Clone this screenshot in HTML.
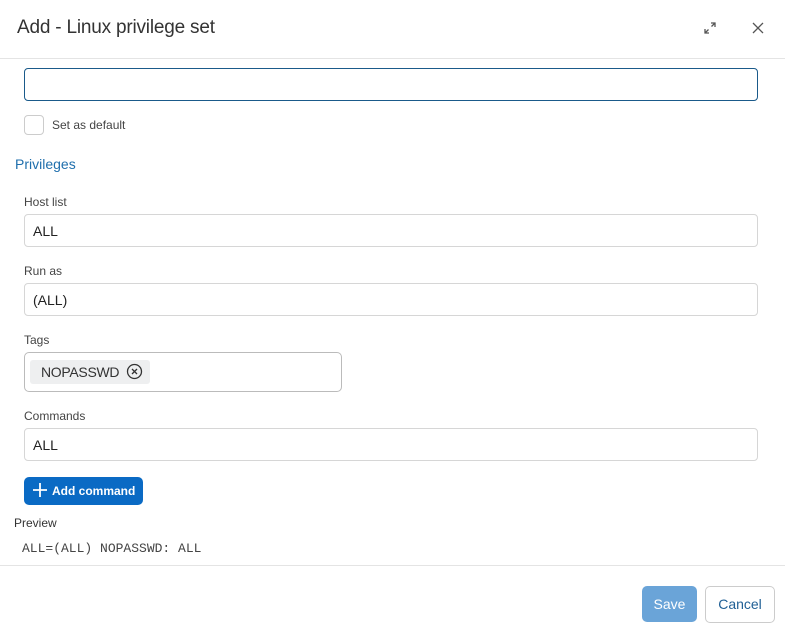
<!DOCTYPE html>
<html><head><style>
*{box-sizing:border-box;margin:0;padding:0}
body{width:785px;height:635px;background:#fff;font-family:"Liberation Sans",sans-serif;color:#333;position:relative;overflow:hidden}
.a{position:absolute}
.inp{position:absolute;left:24px;width:734px;height:33px;border:1px solid #d6d6d6;border-radius:4px;font-size:14px;padding:8px 8px;color:#222}
.lbl{position:absolute;left:24px;font-size:12px;color:#444}
</style></head><body>
<div class="a" style="left:17px;top:17px;font-size:19px;color:#333;letter-spacing:-0.2px">Add - Linux privilege set</div>
<svg class="a" style="left:703px;top:21px" width="14" height="14" viewBox="0 0 14 14" fill="none" stroke="#555" stroke-width="1.3"><path d="M8 2h4v4M12 2L8.5 5.5M6 12H2V8M2 12l3.5-3.5"/></svg>
<svg class="a" style="left:752px;top:22px" width="12" height="12" viewBox="0 0 12 12" stroke="#555" stroke-width="1.3"><path d="M1 1l10 10M11 1L1 11"/></svg>
<div class="a" style="left:0;top:58px;width:785px;height:1px;background:#e4e4e4"></div>
<div class="a" style="left:24px;top:68px;width:734px;height:33px;border:1px solid #1a5a8a;border-radius:4px"></div>
<div class="a" style="left:24px;top:115px;width:20px;height:20px;border:1px solid #ccc;border-radius:4px"></div>
<div class="a" style="left:52px;top:118px;font-size:12px;color:#444">Set as default</div>
<div class="a" style="left:15px;top:156px;font-size:14px;color:#1f6fad">Privileges</div>
<div class="lbl" style="top:195px">Host list</div>
<div class="inp" style="top:214px">ALL</div>
<div class="lbl" style="top:264px">Run as</div>
<div class="inp" style="top:283px">(ALL)</div>
<div class="lbl" style="top:333px">Tags</div>
<div class="a" style="left:24px;top:352px;width:318px;height:40px;border:1px solid #bbb;border-radius:5px"></div>
<div class="a" style="left:30px;top:360px;width:120px;height:24px;background:#eeeff0;border-radius:3px;font-size:14px;padding:4px 11px;color:#333;letter-spacing:-0.3px">NOPASSWD</div>
<svg class="a" style="left:126px;top:363px" width="17" height="17" viewBox="0 0 17 17" fill="none" stroke="#333" stroke-width="1.3"><circle cx="8.5" cy="8.5" r="7"/><path d="M6 6l5 5M11 6l-5 5"/></svg>
<div class="lbl" style="top:409px">Commands</div>
<div class="inp" style="top:428px">ALL</div>
<div class="a" style="left:24px;top:477px;width:119px;height:28px;background:#0a6ac4;border-radius:5px;color:#fff;font-size:12px;font-weight:bold;padding:7px 0 0 28px">Add command</div>
<svg class="a" style="left:32px;top:482px" width="16" height="16" viewBox="0 0 16 16" stroke="#fff" stroke-width="1.8"><path d="M8 1v14M1 8h14"/></svg>
<div class="a" style="left:14px;top:516px;font-size:12px;color:#333">Preview</div>
<div class="a" style="left:22px;top:541px;font-family:'Liberation Mono',monospace;font-size:13px;color:#444">ALL=(ALL) NOPASSWD: ALL</div>
<div class="a" style="left:0;top:565px;width:785px;height:1px;background:#e4e4e4"></div>
<div class="a" style="left:642px;top:586px;width:55px;height:36px;background:#6aa4d8;border-radius:5px;color:#fff;font-size:14px;text-align:center;line-height:36px">Save</div>
<div class="a" style="left:705px;top:586px;width:70px;height:37px;border:1px solid #ccc;border-radius:5px;color:#1f5f95;font-size:14px;text-align:center;line-height:35px">Cancel</div>
</body></html>
